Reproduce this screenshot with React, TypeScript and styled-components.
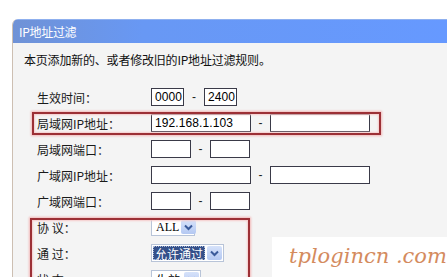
import React from "react";
import styled, { createGlobalStyle } from "styled-components";

const Global = createGlobalStyle`
  html, body { margin: 0; padding: 0; background: #ffffff; overflow: hidden; }
  body { width: 447px; height: 277px; font-family: "Noto Sans CJK SC", "DejaVu Sans", sans-serif; }
`;

const Page = styled.div`
  position: relative;
  width: 447px;
  height: 277px;
  padding: 19px 0 0 12px;
  box-sizing: border-box;
  overflow: hidden;
`;

const Panel = styled.div`
  height: 100%;
  border-left: 1px solid #cdbfb2;
  border-top-left-radius: 6px;
  background: #f4f4f4;
  overflow: hidden;
`;

const Header = styled.div`
  height: 24px;
  display: flex;
  align-items: center;
  padding-left: 6px;
  background: linear-gradient(to right, #6f92d6 0%, #6898f4 30%, #6699ff 100%);
  border-top: 1px solid #8fb0ef;
  box-sizing: border-box;
  color: #ffffff;
  font-size: 12px;
  font-family: "Noto Sans CJK SC", sans-serif;
  letter-spacing: -0.3px;
`;

const Body = styled.div`
  padding: 9px 0 0 11px;
`;

const Intro = styled.div`
  height: 16px;
  line-height: 16px;
  font-size: 12px;
  color: #111;
  letter-spacing: -0.2px;
`;

const Form = styled.div`
  margin: 16px 0 0 13px;
  display: flex;
  flex-direction: column;
`;

const Group = styled.div<{ $left: number; $width: number; $top: number; $bottom: number }>`
  position: relative;
  display: flex;
  flex-direction: column;
  &::after {
    content: "";
    position: absolute;
    left: ${(p) => p.$left}px;
    width: ${(p) => p.$width}px;
    top: ${(p) => p.$top}px;
    bottom: ${(p) => p.$bottom}px;
    border: 2px solid #9c3036;
    box-shadow: 0 0 2px 1px #f2b8b8, inset 0 0 2px 1px #f6caca;
    box-sizing: border-box;
    pointer-events: none;
  }
`;

const Row = styled.div`
  height: 26px;
  display: flex;
  align-items: center;
`;

const Label = styled.div`
  width: 114px;
  flex: none;
  font-size: 12px;
  color: #1a1a1a;
  white-space: pre;
`;

const Input = styled.div<{ $w: number }>`
  width: ${(p) => p.$w}px;
  height: 18px;
  box-sizing: border-box;
  border: 1px solid #3a3a48;
  background: #ffffff;
  display: flex;
  align-items: center;
  padding-left: 3px;
  font-family: "Liberation Sans", Arial, sans-serif;
  font-size: 12px;
  color: #000;
  letter-spacing: 0.1px;
`;

const Dash = styled.div<{ $w: number }>`
  width: ${(p) => p.$w}px;
  text-align: center;
  font-family: "Liberation Sans", Arial, sans-serif;
  font-size: 12px;
  color: #222;
`;

const Select = styled.div<{ $w: number }>`
  width: ${(p) => p.$w}px;
  height: 18px;
  box-sizing: border-box;
  border: 1px solid #b8c4d8;
  background: #ffffff;
  display: flex;
  align-items: stretch;
  padding: 1px;
`;

const SelectText = styled.div<{ $active?: boolean }>`
  flex: 1;
  display: flex;
  align-items: center;
  padding-left: ${(p) => (p.$active ? 2 : 3)}px;
  margin-right: 2px;
  font-size: 12px;
  font-family: "Liberation Serif", "Noto Sans CJK SC", serif;
  color: ${(p) => (p.$active ? "#ffffff" : "#000")};
  background: ${(p) => (p.$active ? "#34508a" : "transparent")};
  outline: ${(p) => (p.$active ? "1px dotted #a8b8d8" : "none")};
  outline-offset: -1px;
`;

const CjkText = styled.span`
  font-family: "Noto Sans CJK SC", sans-serif;
`;

const DropBtn = styled.div`
  width: 15px;
  flex: none;
  background: linear-gradient(#d6e2fa, #b4c8f2);
  border-radius: 2px;
  display: flex;
  align-items: center;
  justify-content: center;
`;

const Watermark = styled.div`
  position: absolute;
  left: 272px;
  top: 237px;
  width: 175px;
  height: 40px;
  background: #ffffff;
  display: flex;
  align-items: center;
  padding: 0 0 2px 17px;
  box-sizing: border-box;
  font-family: "DejaVu Serif", serif;
  font-style: italic;
  font-size: 21px;
  color: #d48b5e;
  letter-spacing: 0px;
  white-space: pre;
`;

const Chevron = () => (
  <svg width="9" height="7" viewBox="0 0 9 7">
    <path d="M1 1.5 L4.5 5 L8 1.5" fill="none" stroke="#3a5a9a" strokeWidth="2" />
  </svg>
);

export default function App() {
  return (
    <>
      <Global />
      <Page>
        <Panel>
          <Header>IP地址过滤</Header>
          <Body>
            <Intro>本页添加新的、或者修改旧的IP地址过滤规则。</Intro>
            <Form>
              <Row>
                <Label>生效时间：</Label>
                <Input $w={33}>0000</Input>
                <Dash $w={20}>-</Dash>
                <Input $w={33}>2400</Input>
              </Row>
              <Group $left={-5} $width={349} $top={2} $bottom={1}>
                <Row>
                  <Label>局域网IP地址：</Label>
                  <Input $w={100}>192.168.1.103</Input>
                  <Dash $w={19}>-</Dash>
                  <Input $w={100} />
                </Row>
              </Group>
              <Row>
                <Label>局域网端口：</Label>
                <Input $w={40} />
                <Dash $w={19}>-</Dash>
                <Input $w={40} />
              </Row>
              <Row>
                <Label>广域网IP地址：</Label>
                <Input $w={100} />
                <Dash $w={19}>-</Dash>
                <Input $w={100} />
              </Row>
              <Row>
                <Label>广域网端口：</Label>
                <Input $w={40} />
                <Dash $w={19}>-</Dash>
                <Input $w={40} />
              </Row>
              <Group $left={-7} $width={220} $top={4} $bottom={-20}>
                <Row>
                  <Label>协 议：</Label>
                  <Select $w={44}>
                    <SelectText>ALL</SelectText>
                    <DropBtn>
                      <Chevron />
                    </DropBtn>
                  </Select>
                </Row>
                <Row>
                  <Label>通 过：</Label>
                  <Select $w={73}>
                    <SelectText $active>
                      <CjkText>允许通过</CjkText>
                    </SelectText>
                    <DropBtn>
                      <Chevron />
                    </DropBtn>
                  </Select>
                </Row>
                <Row>
                  <Label>状 态：</Label>
                  <Select $w={50}>
                    <SelectText>
                      <CjkText>生效</CjkText>
                    </SelectText>
                    <DropBtn>
                      <Chevron />
                    </DropBtn>
                  </Select>
                </Row>
              </Group>
            </Form>
          </Body>
        </Panel>
        <Watermark>tplogincn .com</Watermark>
      </Page>
    </>
  );
}
